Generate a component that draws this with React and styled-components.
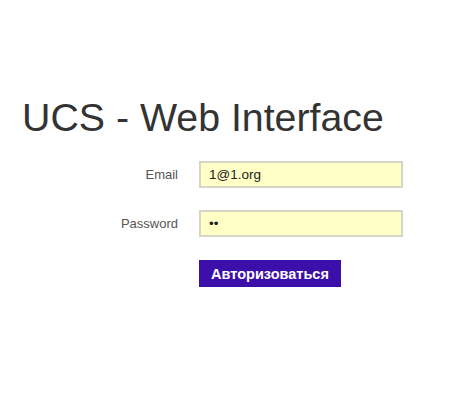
import React from 'react'
import styled, { createGlobalStyle } from 'styled-components'

const GlobalStyle = createGlobalStyle`
    html, body {
        margin: 0;
        padding: 0;
        background: #ffffff;
    }
    body {
        font-family: "Liberation Sans", Arial, sans-serif;
    }
`

const Page = styled.div`
    padding: 95px 0 0 22px;
    height: 410px;
    box-sizing: border-box;
`

const Title = styled.h1`
    margin: 0 0 21px 0;
    font-size: 39.3px;
    line-height: 45px;
    font-weight: normal;
    color: #333333;
`

const Form = styled.form`
    display: grid;
    grid-template-columns: 156px 204px;
    column-gap: 21px;
    row-gap: 22px;
    align-items: center;
`

const Label = styled.label`
    text-align: right;
    font-size: 13px;
    color: #555555;
`

const Field = styled.input`
    box-sizing: border-box;
    width: 204px;
    height: 27px;
    margin: 0;
    padding: 0 8px;
    border: 2px solid #d6d6c6;
    background: #ffffc6;
    font-family: "Liberation Sans", Arial, sans-serif;
    font-size: 13.5px;
    color: #222222;
    outline: none;
`

const Submit = styled.button`
    grid-column: 2;
    justify-self: start;
    margin-top: 1px;
    width: 142px;
    height: 27px;
    padding: 0;
    border: none;
    background: #3c0fab;
    color: #ffffff;
    font-family: "Liberation Sans", Arial, sans-serif;
    font-size: 14.5px;
    font-weight: bold;
`

const App = () => {
    return (
        <Page>
            <GlobalStyle />
            <Title>UCS - Web Interface</Title>
            <Form onSubmit={e => e.preventDefault()}>
                <Label htmlFor="email">Email</Label>
                <Field id="email" type="text" defaultValue="1@1.org" />
                <Label htmlFor="password">Password</Label>
                <Field id="password" type="password" defaultValue="12" />
                <Submit type="submit">Авторизоваться</Submit>
            </Form>
        </Page>
    )
}

export default App
